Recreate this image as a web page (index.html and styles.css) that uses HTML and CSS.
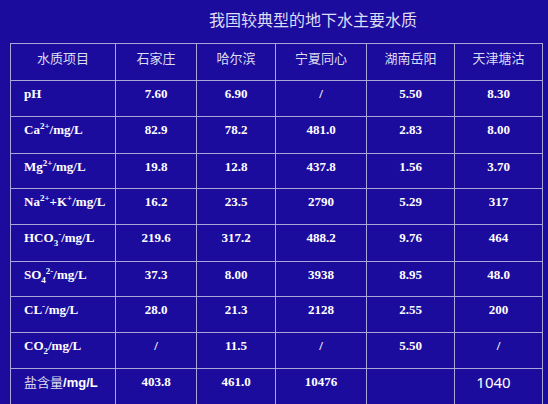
FILE: index.html
```html
<!DOCTYPE html>
<html lang="zh">
<head>
  <meta charset="UTF-8" />
  <title>我国较典型的地下水主要水质</title>
  <link rel="stylesheet" href="styles.css">
</head>
<body>
  <div class="slide">
    <h1 class="title">我国较典型的地下水主要水质</h1>

    <table class="quality">
      <colgroup>
        <col class="c-name">
        <col class="c-1">
        <col class="c-2">
        <col class="c-3">
        <col class="c-4">
        <col class="c-5">
      </colgroup>
      <thead>
        <tr>
          <th>水质项目</th>
          <th>石家庄</th>
          <th>哈尔滨</th>
          <th>宁夏同心</th>
          <th>湖南岳阳</th>
          <th>天津塘沽</th>
        </tr>
      </thead>
      <tbody>
        <tr class="r1">
          <td class="item">pH</td>
          <td>7.60</td><td>6.90</td><td>/</td><td>5.50</td><td>8.30</td>
        </tr>
        <tr class="r2">
          <td class="item">Ca<sup>2+</sup>/mg/L</td>
          <td>82.9</td><td>78.2</td><td>481.0</td><td>2.83</td><td>8.00</td>
        </tr>
        <tr class="r3">
          <td class="item">Mg<sup>2+</sup>/mg/L</td>
          <td>19.8</td><td>12.8</td><td>437.8</td><td>1.56</td><td>3.70</td>
        </tr>
        <tr class="r4">
          <td class="item">Na<sup>2+</sup>+K<sup>+</sup>/mg/L</td>
          <td>16.2</td><td>23.5</td><td>2790</td><td>5.29</td><td>317</td>
        </tr>
        <tr class="r5">
          <td class="item">HCO<sub>3</sub><sup>-</sup>/mg/L</td>
          <td>219.6</td><td>317.2</td><td>488.2</td><td>9.76</td><td>464</td>
        </tr>
        <tr class="r6">
          <td class="item">SO<sub>4</sub><sup>2-</sup>/mg/L</td>
          <td>37.3</td><td>8.00</td><td>3938</td><td>8.95</td><td>48.0</td>
        </tr>
        <tr class="r7">
          <td class="item">CL<sup>-</sup>/mg/L</td>
          <td>28.0</td><td>21.3</td><td>2128</td><td>2.55</td><td>200</td>
        </tr>
        <tr class="r8">
          <td class="item">CO<sub>2</sub>/mg/L</td>
          <td>/</td><td>11.5</td><td>/</td><td>5.50</td><td>/</td>
        </tr>
        <tr class="r9">
          <td class="item"><span class="cjk">盐含量</span><span class="unit">/mg/L</span></td>
          <td>403.8</td><td>461.0</td><td>10476</td><td></td><td class="plain">1040</td>
        </tr>
      </tbody>
    </table>
  </div>
</body>
</html>
```

FILE: styles.css
```css
html, body {
  margin: 0;
  height: 404px;
  overflow: hidden;
  background: #1c0c9e;
}

.slide {
  padding: 9px 0 0 10px;
}

.title {
  margin: 0 0 14px;
  padding-left: 68px;
  text-align: center;
  font-family: "Noto Sans CJK SC", sans-serif;
  font-weight: normal;
  font-size: 16px;
  line-height: 20px;
  color: #dcdcf2;
}

.quality {
  width: 532px;
  table-layout: fixed;
  border-collapse: collapse;
  color: #ffffff;
}

.c-name { width: 105px; }
.c-1 { width: 81px; }
.c-2 { width: 79px; }
.c-3 { width: 91px; }
.c-4 { width: 88px; }
.c-5 { width: 88px; }

.quality th,
.quality td {
  border: 1px solid #aaa6d8;
  padding: 5px 0 0;
  vertical-align: top;
  text-align: center;
  height: 31px;
  box-sizing: border-box;
}

.quality th {
  height: 37px;
  font-family: "Noto Sans CJK SC", sans-serif;
  font-weight: normal;
  font-size: 13px;
  line-height: 18px;
  color: #dcdcf0;
}

.quality td {
  font-family: "Liberation Serif", "Times New Roman", serif;
  font-weight: bold;
  font-size: 13px;
  line-height: 16px;
}

.quality tr { height: 36px; }
.quality .r2, .quality .r5 { height: 37px; }
.quality .r3, .quality .r6 { height: 35px; }
.quality .r9 { height: 44px; }

.quality td.item {
  text-align: left;
  padding-left: 13px;
}

sup, sub {
  font-size: 9px;
  line-height: 0;
}

sup {
  vertical-align: 5px;
}

.cjk {
  font-family: "Noto Sans CJK SC", sans-serif;
  font-weight: normal;
  color: #dcdcf0;
}

.unit {
  font-family: "Liberation Sans", Arial, sans-serif;
  font-weight: bold;
}

.quality td.plain {
  font-family: "Noto Sans", "Liberation Sans", sans-serif;
  font-weight: normal;
  font-size: 15px;
  line-height: 18px;
  padding: 4px 10px 0 0;
}
```
